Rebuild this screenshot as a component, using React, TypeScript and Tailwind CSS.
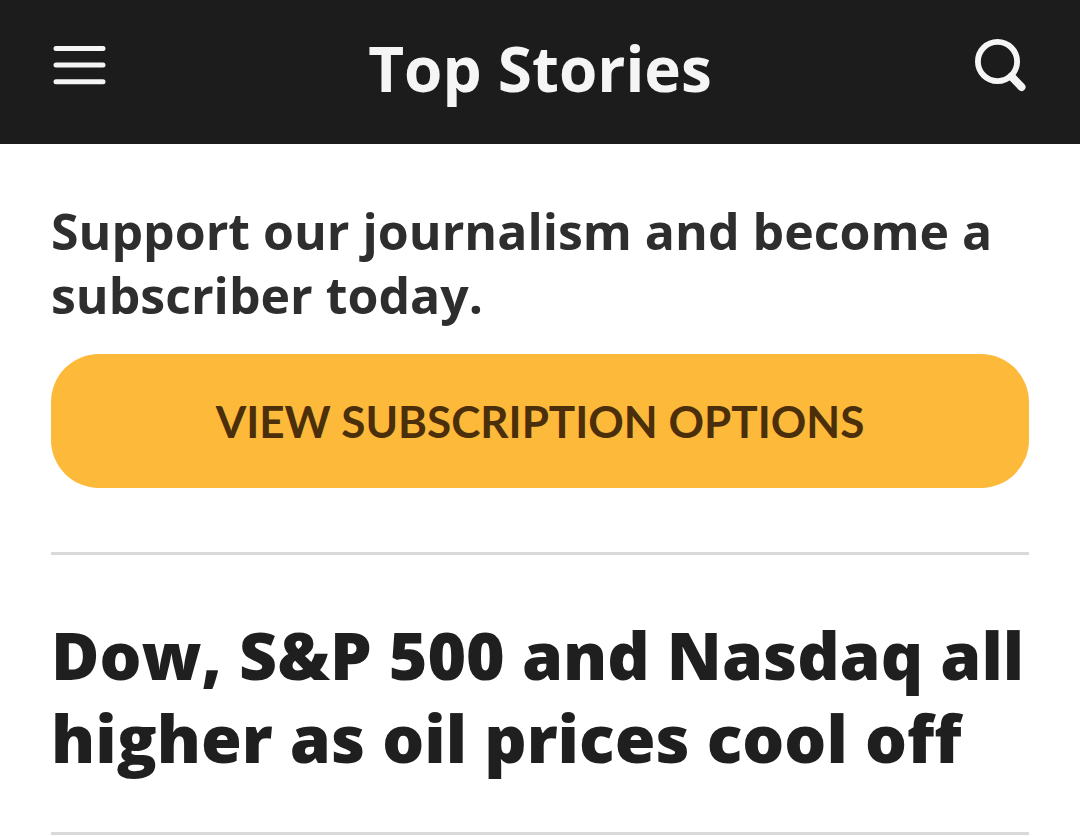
type Story = {
    id: string;
    title: string;
    href: string;
};

const stories: Story[] = [
    { id: "markets", title: "Dow, S&P 500 and Nasdaq all higher as oil prices cool off", href: "#markets" },
];

function MenuIcon() {
    return (
        <svg className="w-14 h-14" viewBox="0 0 56 56" fill="none" stroke="currentColor" strokeWidth="5" strokeLinecap="round" aria-hidden="true">
            <path d="M5 12.5H52M5 29H52M5 45.7H52" />
        </svg>
    );
}

function SearchIcon() {
    return (
        <svg className="w-14 h-14" viewBox="0 0 56 56" fill="none" stroke="currentColor" aria-hidden="true">
            <circle cx="24.5" cy="25.5" r="19.6" strokeWidth="5.8" />
            <path d="M38.5 40.5L48.5 51" strokeWidth="8" strokeLinecap="round" />
        </svg>
    );
}

export default function App() {
    return (
        <div className="min-h-screen bg-white font-['Open_Sans',sans-serif] text-[#1f1f1f]">
            {/* Header */}
            <header className="flex items-start justify-between bg-[#1c1c1c] px-[51px] pt-9 h-36 text-[#f5f5f5]">
                <button type="button" aria-label="Menu">
                    <MenuIcon />
                </button>
                <h1 className="text-[62px] leading-[64px] font-bold">Top Stories</h1>
                <button type="button" aria-label="Search">
                    <SearchIcon />
                </button>
            </header>

            <main className="px-[51px]">
                {/* Subscribe */}
                <section className="pt-[55px] pb-16 border-b-3 border-[#d9d9d9]">
                    <p className="text-[50px] leading-[64px] font-bold text-[#2e2e2e]">
                        Support our journalism and become a subscriber today.
                    </p>
                    <button
                        type="button"
                        className="mt-[27px] w-full h-[134px] rounded-[48px] bg-[#fcb93a] font-['Lato',sans-serif] text-[44px] leading-[54px] font-bold text-[#4b2e0a]"
                    >
                        VIEW SUBSCRIPTION OPTIONS
                    </button>
                </section>

                {/* Stories */}
                {stories.map((story) => (
                    <article key={story.id} className="pt-[58px] pb-[53px] border-b-3 border-[#d9d9d9]">
                        <h2 className="text-[66px] leading-[83px] font-extrabold">
                            <a href={story.href}>{story.title}</a>
                        </h2>
                    </article>
                ))}
            </main>
        </div>
    );
}
